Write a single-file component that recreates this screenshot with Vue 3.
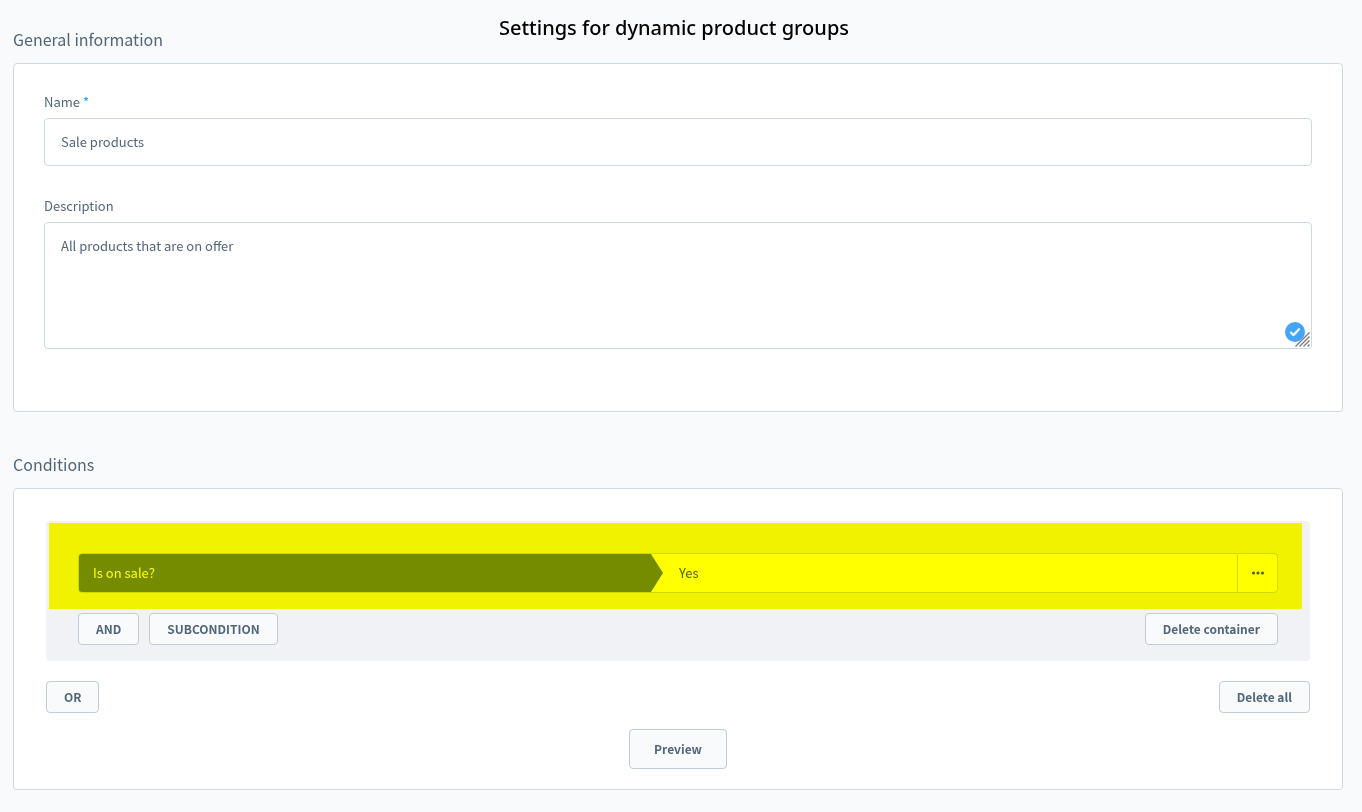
<script setup>
import { ref } from 'vue'

const name = ref('Sale products')
const description = ref('All products that are on offer')
const condition = ref('Is on sale?')
const value = ref('Yes')
</script>

<template>
  <main class="page">
    <header class="header">
      <h2 class="section-title">General information</h2>
      <h1 class="page-title">Settings for dynamic product groups</h1>
    </header>

    <section class="card info" aria-label="General information">
      <div class="field">
        <label class="label" for="group-name">Name <span class="required">*</span></label>
        <input id="group-name" v-model="name" class="control" type="text" required />
      </div>
      <div class="field">
        <label class="label" for="group-description">Description</label>
        <div class="area">
          <textarea id="group-description" v-model="description" class="control textarea"></textarea>
          <svg class="status" width="20" height="20" viewBox="0 0 20 20" aria-hidden="true">
            <circle cx="10" cy="10" r="10" fill="#42a5f9" />
            <path d="M6 10.6l2.6 2.5 5.4-5.9" fill="none" stroke="#fff" stroke-width="2.2" stroke-linecap="round" stroke-linejoin="round" />
          </svg>
          <svg class="grip" width="15" height="15" viewBox="0 0 15 15" aria-hidden="true">
            <path d="M0.5 14.5l14-14M4.5 14.5l10-10M8.5 14.5l6-6M12.5 14.5l2-2" fill="none" stroke="#7d7d7d" stroke-width="1.4" />
          </svg>
        </div>
      </div>
    </section>

    <h2 class="section-title conditions-title">Conditions</h2>

    <section class="card conditions" aria-label="Conditions">
      <div class="container">
        <div class="rule">
          <select v-model="condition" class="rule-type" aria-label="Condition">
            <option>Is on sale?</option>
          </select>
          <select v-model="value" class="rule-value" aria-label="Value">
            <option>Yes</option>
            <option>No</option>
          </select>
          <button class="rule-menu" type="button" aria-label="Condition actions">
            <svg width="14" height="4" viewBox="0 0 14 4" aria-hidden="true">
              <circle cx="2.5" cy="2" r="1.6" />
              <circle cx="7" cy="2" r="1.6" />
              <circle cx="11.5" cy="2" r="1.6" />
            </svg>
          </button>
        </div>
        <div class="actions">
          <button class="button" type="button">AND</button>
          <button class="button" type="button">SUBCONDITION</button>
          <button class="button last" type="button">Delete container</button>
        </div>
        <div class="highlight"></div>
      </div>
      <div class="actions outer">
        <button class="button" type="button">OR</button>
        <button class="button last" type="button">Delete all</button>
      </div>
      <button class="button preview" type="button">Preview</button>
    </section>
  </main>
</template>

<style>
body {
  margin: 0;
  background: #f9fafc;
}
</style>

<style scoped>
.page {
  box-sizing: border-box;
  padding: 0 19px 22px 13px;
  color: #52667a;
  font-family: "Noto Sans CJK SC", "Noto Sans", sans-serif;
  font-size: 13px;
  line-height: 20px;
}
.page * {
  box-sizing: border-box;
}
.header {
  display: grid;
  grid-template-columns: 1fr auto 1fr;
  height: 63px;
  padding: 13px 8px 0 0;
}
.section-title {
  margin: 0;
  padding-top: 14px;
  font-size: 16px;
  font-weight: 400;
  line-height: 24px;
}
.page-title {
  margin: 0;
  color: #000;
  font-family: "Noto Sans", sans-serif;
  font-size: 20px;
  font-weight: 500;
  line-height: 30px;
}
.card {
  border: 1px solid #d1d9e0;
  border-radius: 4px;
  background: #fff;
}
.info {
  display: grid;
  gap: 30px;
  padding: 28px 30px 62px;
}
.field {
  display: grid;
  gap: 6px;
}
.required {
  color: #189eff;
}
.control {
  display: block;
  width: 100%;
  height: 48px;
  margin: 0;
  padding: 0 16px 2px;
  border: 1px solid #d1d9e0;
  border-radius: 4px;
  background: #fff;
  color: inherit;
  font: inherit;
  outline: none;
}
.textarea {
  height: 127px;
  padding: 13px 16px;
  resize: none;
}
.area {
  position: relative;
}
.status {
  position: absolute;
  right: 7px;
  bottom: 7px;
}
.grip {
  position: absolute;
  right: 2px;
  bottom: 2px;
}
.conditions-title {
  padding: 40px 0 12px;
}
.conditions {
  display: flex;
  flex-direction: column;
  padding: 32px 32px 20px;
}
.container {
  position: relative;
  display: grid;
  gap: 20px;
  padding: 32px 32px 16px;
  border-radius: 4px;
  background: #f0f2f5;
}
.rule {
  display: flex;
  height: 40px;
  border: 1px solid #d1d9e0;
  border-radius: 4px;
  background: #fff;
  overflow: hidden;
}
.rule-type,
.rule-value {
  appearance: none;
  min-width: 0;
  margin: 0;
  border: 0;
  border-radius: 0;
  font: inherit;
  outline: none;
}
.rule-type {
  flex: none;
  width: calc(50% - 15px);
  padding: 0 14px;
  background: #758ca3;
  color: #fff;
  clip-path: polygon(0 0, calc(100% - 12px) 0, 100% 50%, calc(100% - 12px) 100%, 0 100%);
}
.rule-value {
  flex: 1;
  padding: 0 16px;
  background: transparent;
  color: #52667a;
}
.rule-menu {
  display: grid;
  place-items: center;
  width: 40px;
  padding: 0;
  border: 0;
  border-left: 1px solid #d1d9e0;
  background: transparent;
  fill: #52667a;
}
.actions {
  display: flex;
  gap: 10px;
}
.outer {
  margin-top: 20px;
}
.last {
  margin-left: auto;
}
.button {
  height: 32px;
  padding: 0 17px;
  border: 1px solid #c2ccd6;
  border-radius: 4px;
  background: #f9fafc;
  color: #52667a;
  font: inherit;
  font-size: 12px;
  font-weight: 600;
  line-height: 20px;
}
.preview {
  align-self: center;
  height: 40px;
  margin-top: 16px;
  padding: 0 24px;
}
.highlight {
  position: absolute;
  top: 2px;
  right: 8px;
  left: 3px;
  height: 86px;
  background: #ff0;
  mix-blend-mode: multiply;
  pointer-events: none;
}
</style>
